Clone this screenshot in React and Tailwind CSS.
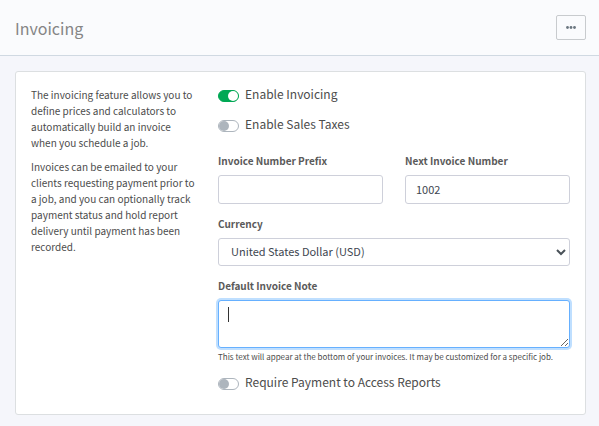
import React from 'react';

const Switch = ({ id, label, defaultChecked }) => (
  <div className="flex items-start h-4">
    <input
      id={id}
      type="checkbox"
      role="switch"
      defaultChecked={defaultChecked}
      className="appearance-none flex shrink-0 items-center w-[21px] h-3 mt-[3px] rounded-full border border-[#adb5bd] bg-white before:block before:size-[10px] before:rounded-full before:bg-[#adb5bd] checked:justify-end checked:border-[#00a854] checked:bg-[#00a854] checked:before:bg-white"
    />
    <label htmlFor={id} className="pl-[6px] text-xs leading-[14px]">{label}</label>
  </div>
);

const Label = ({ htmlFor, children }) => (
  <label htmlFor={htmlFor} className="block mb-[6px] text-[10px] leading-4 font-bold text-[#5a5a5a]">{children}</label>
);

const control = 'block w-full rounded-[3px] border border-[#ced0da] bg-white pb-[2px] text-[11px] text-[#3e4650] outline-none focus:border-[#66b0ff] focus:ring-2 focus:ring-[#bfdfff]';

const App = () => {
  return (
    <div className="min-h-screen bg-[#f5f6fb] text-[#4c4c4c] font-['Noto_Sans_CJK_SC','Noto_Sans',sans-serif]">
      <header className="flex items-center justify-between h-14 pl-[15px] pr-[13px] border-b border-[#d0d9e2] bg-[#fafbfd]">
        <h1 className="text-base leading-6 text-[#858585]">Invoicing</h1>
        <button type="button" aria-label="More" className="flex items-center justify-center w-[30px] h-[25px] rounded-[2px] border border-[#c8cbce]">
          <svg className="w-[10px] h-[3px]" viewBox="0 0 10 3" fill="#6b7780">
            <circle cx="1.5" cy="1.5" r="1.4" />
            <circle cx="5" cy="1.5" r="1.4" />
            <circle cx="8.5" cy="1.5" r="1.4" />
          </svg>
        </button>
      </header>

      <main className="pt-[15px] pl-[15px] pr-[13px] pb-[11px]">
        <form className="grid grid-cols-3 gap-[22px] p-[15px] pb-[23px] rounded-[3px] border border-[#dcdfe1] bg-white">
          <div className="space-y-2 text-[10px] leading-4">
            <p>The invoicing feature allows you to define prices and calculators to automatically build an invoice when you schedule a job.</p>
            <p>Invoices can be emailed to your clients requesting payment prior to a job, and you can optionally track payment status and hold report delivery until payment has been recorded.</p>
          </div>

          <div className="col-span-2">
            <div className="space-y-[14px]">
              <Switch id="enable" label="Enable Invoicing" defaultChecked />
              <Switch id="taxes" label="Enable Sales Taxes" />
            </div>

            <div className="grid grid-cols-2 gap-[22px] mt-5">
              <div>
                <Label htmlFor="prefix">Invoice Number Prefix</Label>
                <input id="prefix" type="text" className={`${control} h-[29px] px-[10px]`} />
              </div>
              <div>
                <Label htmlFor="next">Next Invoice Number</Label>
                <input id="next" type="text" defaultValue="1002" className={`${control} h-[29px] px-[10px]`} />
              </div>
            </div>

            <div className="mt-3">
              <Label htmlFor="currency">Currency</Label>
              <div className="relative">
                <select id="currency" className={`${control} appearance-none h-7 px-3`}>
                  <option>United States Dollar (USD)</option>
                </select>
                <svg className="absolute right-1 top-[10px] w-[10px] h-2 pointer-events-none" viewBox="0 0 10 8" fill="none" stroke="#4a5259" strokeWidth="2">
                  <path d="M1 2l4 4 4-4" />
                </svg>
              </div>
            </div>

            <div className="mt-3">
              <Label htmlFor="note">Default Invoice Note</Label>
              <div className="relative">
                <textarea id="note" autoFocus className={`${control} h-12 px-[9px] pt-[6px]`} />
                <span className="absolute left-[10px] top-[7px] w-px h-[15px] bg-[#333] pointer-events-none" />
              </div>
              <p className="mt-[3px] text-[8px] leading-3">This text will appear at the bottom of your invoices. It may be customized for a specific job.</p>
            </div>

            <div className="mt-3">
              <Switch id="require" label="Require Payment to Access Reports" />
            </div>
          </div>
        </form>
      </main>
    </div>
  );
};

export default App;
